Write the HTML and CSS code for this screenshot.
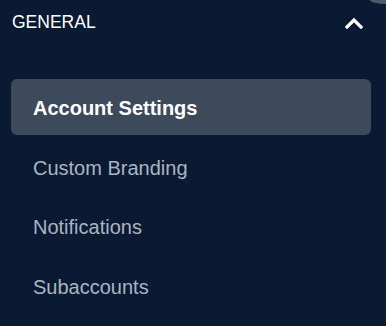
FILE: index.html
```html
<!DOCTYPE html>
<html lang="en">
<head>
    <meta charset="UTF-8">
    <meta name="viewport" content="width=device-width, initial-scale=1.0">
    <title>Settings</title>
    <link rel="stylesheet" href="styles.css">
</head>
<body>
    <div class="avatar"></div>
    <div class="sidebar">
        <div class="section-head">
            <span class="section-title">GENERAL</span>
            <svg class="chevron" width="18" height="12" viewBox="0 0 18 12">
                <path d="M2 10 L9 3 L16 10" fill="none" stroke="#fff" stroke-width="3.2" stroke-linecap="square"/>
            </svg>
        </div>
        <ul class="nav">
            <li class="nav-item active">Account Settings</li>
            <li class="nav-item">Custom Branding</li>
            <li class="nav-item">Notifications</li>
            <li class="nav-item">Subaccounts</li>
        </ul>
    </div>
</body>
</html>
```

FILE: styles.css
```css
body { margin: 0; background: #0a1a32; font-family: "Liberation Sans", Arial, sans-serif; overflow: hidden; }
.avatar { position: absolute; top: 0; right: 0; width: 16px; height: 4px; border-bottom-left-radius: 16px 4px; background: #4d5a6c; }
.sidebar { padding: 12px 0 0 0; }
.section-head { display: flex; justify-content: space-between; align-items: center; padding: 0 23px 0 12px; height: 20px; }
.section-title { color: #fff; font-size: 17.5px; line-height: 20px; }
.chevron { display: block; margin-top: 1px; }
.nav { list-style: none; margin: 47px 0 0 11px; padding: 0; width: 360px; display: flex; flex-direction: column; gap: 3.5px; }
.nav-item { font-size: 20px; line-height: 23px; padding: 18px 22px 15px; color: #aab4c2; border-radius: 6px; }
.nav-item.active { background: #3c4a5c; color: #fff; font-weight: bold; }
```
